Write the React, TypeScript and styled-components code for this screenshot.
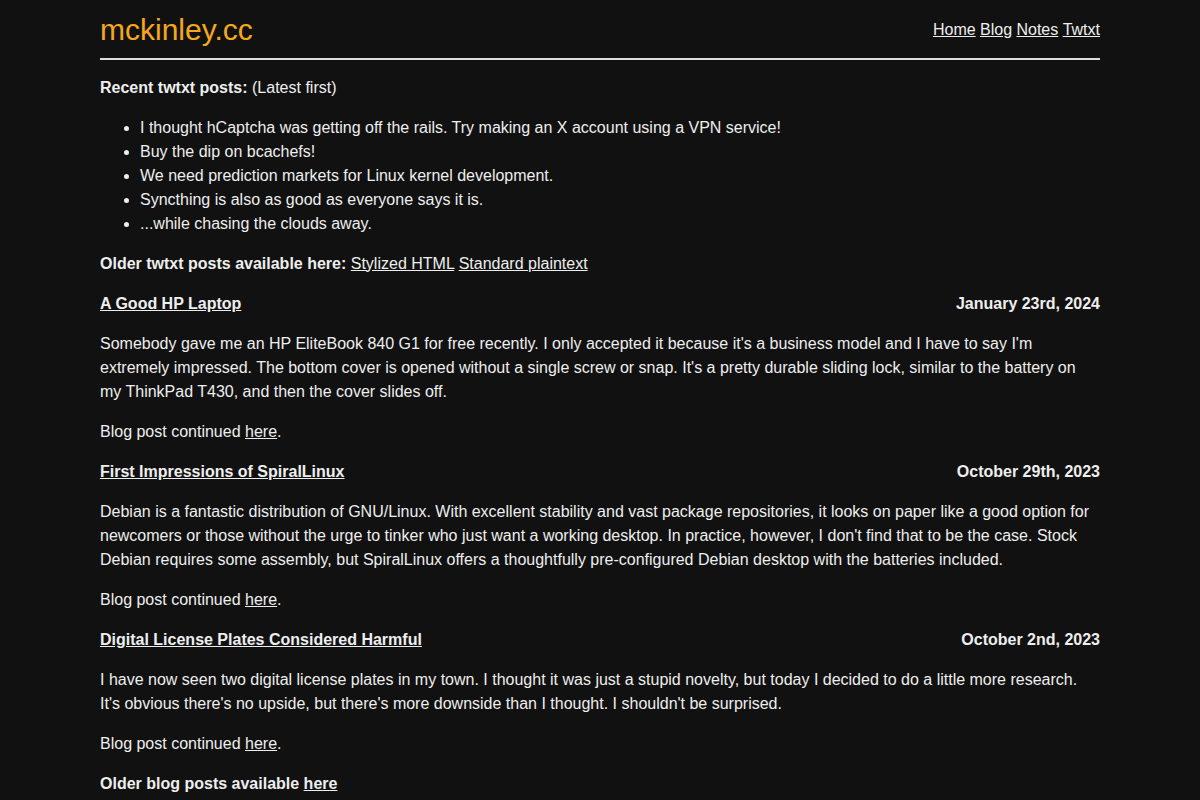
import styled, { createGlobalStyle } from "styled-components";

const GlobalStyle = createGlobalStyle`
  html, body {
    background: #111;
  }
  body {
    margin: 8px;
    color: #eee;
    font-family: "Liberation Sans", Arial, sans-serif;
    font-size: 16px;
    line-height: 1.5;
  }
  a {
    color: #eee;
  }
`;

const Page = styled.div`
  max-width: 1000px;
  margin: 0 auto;
`;

const Header = styled.header`
  display: flex;
  justify-content: space-between;
  align-items: center;
  padding: 5px 0 10px;
  border-bottom: 2px solid #ddd;
`;

const SiteTitle = styled.h1`
  margin: 0;
  font-size: 30px;
  font-weight: normal;
  line-height: 1.15;
  color: #f5a81c;
`;

const Nav = styled.nav`
  display: flex;
  gap: 4.4px;
`;

const Para = styled.p`
  margin: 16px 0;
`;

const List = styled.ul`
  margin: 16px 0;
  padding-left: 40px;
`;

const PostHead = styled.div`
  display: flex;
  justify-content: space-between;
  margin: 16px 0;
  font-weight: bold;
`;

const twts = [
  "I thought hCaptcha was getting off the rails. Try making an X account using a VPN service!",
  "Buy the dip on bcachefs!",
  "We need prediction markets for Linux kernel development.",
  "Syncthing is also as good as everyone says it is.",
  "...while chasing the clouds away.",
];

const posts = [
  {
    title: "A Good HP Laptop",
    date: "January 23rd, 2024",
    body: "Somebody gave me an HP EliteBook 840 G1 for free recently. I only accepted it because it's a business model and I have to say I'm extremely impressed. The bottom cover is opened without a single screw or snap. It's a pretty durable sliding lock, similar to the battery on my ThinkPad T430, and then the cover slides off.",
  },
  {
    title: "First Impressions of SpiralLinux",
    date: "October 29th, 2023",
    body: "Debian is a fantastic distribution of GNU/Linux. With excellent stability and vast package repositories, it looks on paper like a good option for newcomers or those without the urge to tinker who just want a working desktop. In practice, however, I don't find that to be the case. Stock Debian requires some assembly, but SpiralLinux offers a thoughtfully pre-configured Debian desktop with the batteries included.",
  },
  {
    title: "Digital License Plates Considered Harmful",
    date: "October 2nd, 2023",
    body: "I have now seen two digital license plates in my town. I thought it was just a stupid novelty, but today I decided to do a little more research. It's obvious there's no upside, but there's more downside than I thought. I shouldn't be surprised.",
  },
];

export default function App() {
  return (
    <>
      <GlobalStyle />
      <Page>
        <Header>
          <SiteTitle>mckinley.cc</SiteTitle>
          <Nav>
            <a href="#">Home</a>
            <a href="#">Blog</a>
            <a href="#">Notes</a>
            <a href="#">Twtxt</a>
          </Nav>
        </Header>

        <Para>
          <b>Recent twtxt posts:</b> (Latest first)
        </Para>
        <List>
          {twts.map((t) => (
            <li key={t}>{t}</li>
          ))}
        </List>
        <Para>
          <b>Older twtxt posts available here:</b> <a href="#">Stylized HTML</a>{" "}
          <a href="#">Standard plaintext</a>
        </Para>

        {posts.map((p) => (
          <section key={p.title}>
            <PostHead>
              <a href="#">{p.title}</a>
              <span>{p.date}</span>
            </PostHead>
            <Para>{p.body}</Para>
            <Para>
              Blog post continued <a href="#">here</a>.
            </Para>
          </section>
        ))}

        <Para>
          <b>
            Older blog posts available <a href="#">here</a>
          </b>
        </Para>
      </Page>
    </>
  );
}
